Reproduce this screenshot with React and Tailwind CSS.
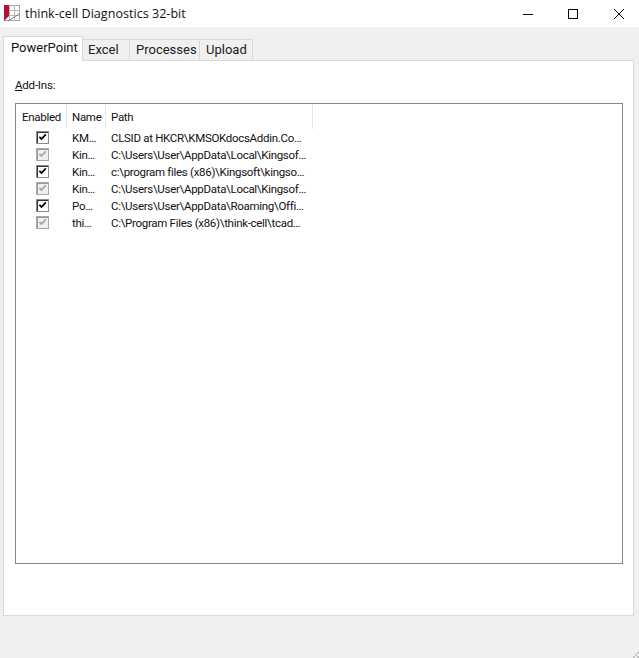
const rows = [
  ["KM…", "CLSID at HKCR\\KMSOKdocsAddin.Co…", true],
  ["Kin…", "C:\\Users\\User\\AppData\\Local\\Kingsof…", false],
  ["Kin…", "c:\\program files (x86)\\Kingsoft\\kingso…", true],
  ["Kin…", "C:\\Users\\User\\AppData\\Local\\Kingsof…", false],
  ["Po…", "C:\\Users\\User\\AppData\\Roaming\\Offi…", true],
  ["thi…", "C:\\Program Files (x86)\\think-cell\\tcad…", false],
];

function Check({ on }) {
  return (
    <div className={on ? "w-[13px] h-[13px] border border-[#8a8a8a] bg-white shadow-[inset_1px_1px_0_#333333]" : "w-[13px] h-[13px] border border-[#a8a8a8] bg-[#efefef] shadow-[inset_1px_1px_0_#999999]"}>
      <svg width="11" height="11" viewBox="0 0 11 11" className="block">
        <path d="M2.4 4.8 L4.5 7 L8.8 2.4" fill="none" stroke={on ? "#000000" : "#a6a6a6"} strokeWidth="1.8" />
      </svg>
    </div>
  );
}

function Logo() {
  return (
    <svg width="16" height="18" viewBox="0 0 16 18" className="block">
      <rect x="0.5" y="0.5" width="15" height="15" fill="#fff" stroke="#a8a8a8" />
      <path d="M5.5 0v16M10.5 0v16M0 5.5h16M0 10.5h16" stroke="#b8b8b8" />
      <path d="M0 0h5v11L0 16z" fill="#b5122f" />
      <path d="M4 16 L15 9" stroke="#777" />
    </svg>
  );
}

function Grip() {
  return (
    <svg width="6" height="6" viewBox="0 0 6 6" className="absolute right-0 bottom-0 block">
      <path d="M4 0h2v2H4zM2 2h2v2H2zM4 4h2v2H4zM0 4h2v2H0z" fill="#c4c4c4" />
    </svg>
  );
}

const tabFont = "text-[13px] leading-[20px] text-[#222222]";

export default function App() {
  return (
    <div className="w-[639px] h-[658px] bg-[#f0f0f0] flex flex-col overflow-hidden font-['Roboto','Noto_Sans',sans-serif] text-black relative">
      <div className="h-[27px] bg-white flex items-center shrink-0">
        <div className="ml-[4px] w-[16px]"><Logo /></div>
        <span className="ml-[5px] text-[12.6px] leading-[20px] text-[#111111] font-['Open_Sans',sans-serif]">think-cell Diagnostics 32-bit</span>
        <div className="ml-auto flex items-center">
          <svg width="12" height="12" viewBox="0 0 12 12" className="block mr-[33px]"><path d="M1 6.5h10" stroke="#000" /></svg>
          <svg width="12" height="12" viewBox="0 0 12 12" className="block mr-[34px]"><rect x="1.5" y="1.5" width="9" height="9" fill="none" stroke="#000" /></svg>
          <svg width="12" height="12" viewBox="0 0 12 12" className="block mr-[14px]"><path d="M1 1l10 10M11 1L1 11" stroke="#000" /></svg>
        </div>
      </div>

      <div className="flex items-end h-[34px] pl-[3px] relative z-10 shrink-0">
        <div className="w-[80px] h-[25px] bg-white border border-[#d9d9d9] border-b-0 pl-[7px] pt-[1px] text-[13px] leading-[20px] text-[#111111]">PowerPoint</div>
        <div className={"w-[47px] h-[22px] bg-[#f0f0f0] border-t border-r border-b border-[#d9d9d9] pl-[5px] " + tabFont}>Excel</div>
        <div className={"w-[70px] h-[22px] bg-[#f0f0f0] border-t border-r border-b border-[#d9d9d9] pl-[6px] " + tabFont}>Processes</div>
        <div className={"w-[53px] h-[22px] bg-[#f0f0f0] border-t border-r border-b border-[#d9d9d9] pl-[6px] " + tabFont}>Upload</div>
      </div>

      <div className="ml-[3px] mr-[5px] -mt-px h-[556px] bg-white border border-[#d9d9d9] px-[11px] flex flex-col">
        <div className="mt-[15px] h-[18px] text-[11.5px] tracking-[-0.2px] leading-[18px] text-[#111111]"><span className="underline">A</span>dd-Ins:</div>
        <div className="mt-[9px] h-[461px] mr-[-1px] border border-[#828790] text-[11.5px] tracking-[-0.3px] text-[#111111]">
          <div className="flex h-[25px] w-[297px]">
            <div className="w-[51px] border-r border-[#e5e5e5] pl-[6px] leading-[26px]">Enabled</div>
            <div className="w-[39px] border-r border-[#e5e5e5] pl-[5px] leading-[26px]">Name</div>
            <div className="w-[207px] border-r border-[#e5e5e5] pl-[5px] leading-[26px]">Path</div>
          </div>
          <div className="flex flex-col">
            {rows.map((r, i) => (
              <div key={i} className="flex h-[17px] items-center leading-[17px]">
                <div className="w-[51px] pl-[20px] self-start pt-[2px]"><Check on={r[2]} /></div>
                <div className="w-[39px] pl-[5px] pt-[1px] whitespace-nowrap">{r[0]}</div>
                <div className="pl-[5px] pt-[1px] whitespace-nowrap">{r[1]}</div>
              </div>
            ))}
          </div>
        </div>
      </div>
      <Grip />
    </div>
  );
}
